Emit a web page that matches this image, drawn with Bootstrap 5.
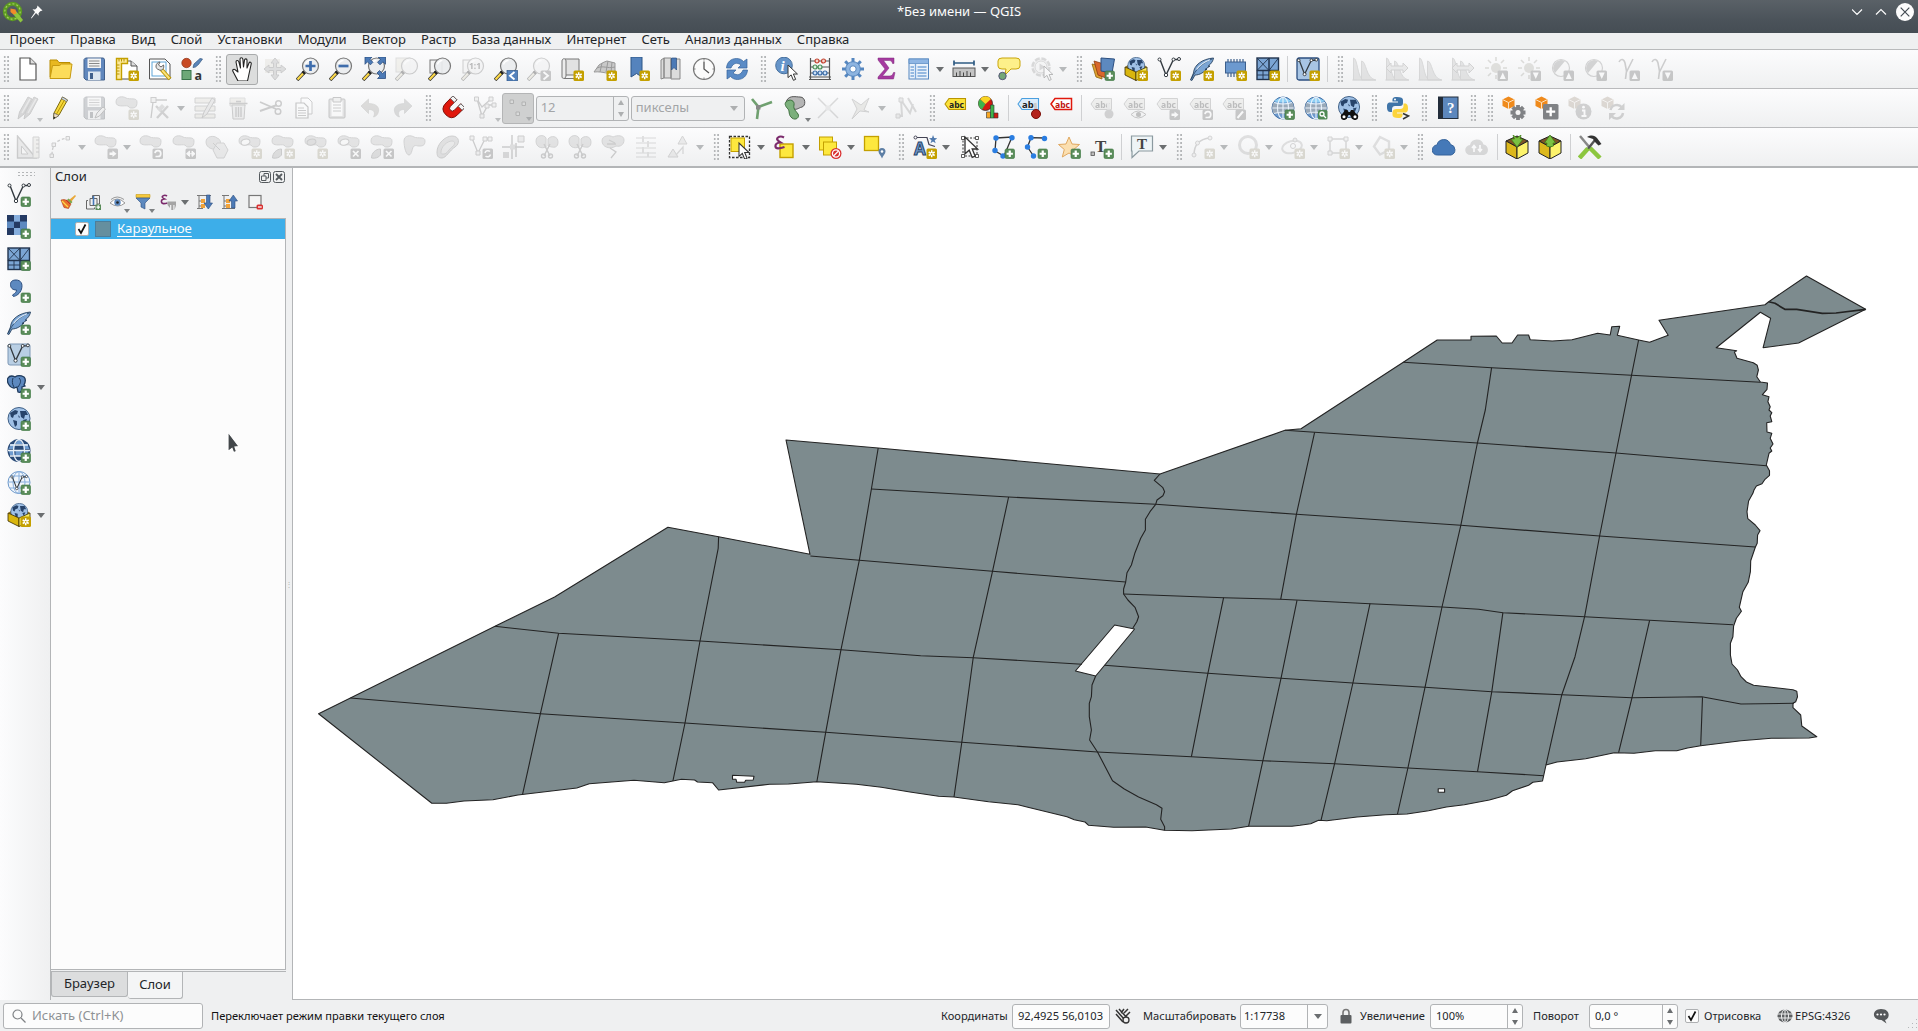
<!DOCTYPE html>
<html lang="ru">
<head>
<meta charset="utf-8">
<title>*Без имени — QGIS</title>
<link href="https://cdn.jsdelivr.net/npm/bootstrap@5.3.0/dist/css/bootstrap.min.css" rel="stylesheet">
<style>
html,body{height:100%}
body{font-family:"Noto Sans",sans-serif;font-size:13px;line-height:1.2;color:#232629;background:#eff0f1;overflow:hidden}
svg{display:block;flex:none}
.iconset{display:none}
.titlebar{height:33px;background:linear-gradient(#5a6167,#4b535a 60%,#454d54);color:#fcfcfc}
.titlebar .side{width:120px}
.menubar{height:16px;line-height:16px;padding:0 0 5px 9.500px;gap:15.2px;align-items:center}
.toolrow{height:39px;border-top:1px solid #b9babc;background:linear-gradient(#fcfcfd,#eff0f1)}
.tb{width:33px;height:31px;display:flex;align-items:center;justify-content:center;flex:none;position:relative;border:0;background:none;padding:0}
.tb svg{width:24px;height:24px}
.dd{width:45px;justify-content:flex-start;padding-left:4.5px}
.dd::after{content:"";border:4.5px solid transparent;border-top:5px solid #6b6e70;border-bottom:0;margin-left:5.3px}
.menu-in::after{content:"";position:absolute;right:1px;bottom:2px;border:3.5px solid transparent;border-top:4px solid #7d8082;border-bottom:0}
.off svg{filter:grayscale(.85) opacity(.33)}
.off::after{opacity:.45}
.toggled{background:#dcdddd;border:1px solid #a9abac;border-radius:3px;width:32px;margin:0 .5px}
.toggled.dim{background:#cfd0d0;border-color:#b4b5b6}
.grip{width:16.4px;height:28px;flex:none;background:radial-gradient(circle,#b4b6b8 .8px,transparent 1px) 6px 0/3.4px 4px;background-clip:content-box;padding:1px 4px 1px 6px}
.grip.first{width:11.3px;padding:1px 2px 1px 3px;background-position:3px 0}
.vsep{width:7px;height:26px;flex:none;background:linear-gradient(#cfd0d2,#cfd0d2) 3px 0/1px 100% no-repeat}
.box{background:#fcfcfc;border:1px solid #b1b3b5;border-radius:3px;display:flex;align-items:center;flex:none}
.box.dimmed{background:#eff0f1;color:#a3a5a7}
.spin{width:15px;height:100%;border-left:1px solid #b1b3b5;display:flex;flex-direction:column;justify-content:center;gap:7px;align-items:center;flex:none}
.spin::before{content:"";border:3.7px solid transparent;border-bottom:5px solid #6b6e70;border-top:0}
.spin::after{content:"";border:3.7px solid transparent;border-top:5px solid #6b6e70;border-bottom:0}
.dimmed .spin::before,.dimmed .spin::after,.dimmed .drop::after{opacity:.5}
.drop{width:20px;height:100%;display:flex;align-items:center;justify-content:center;margin-left:auto}
.drop::after{content:"";border:4.5px solid transparent;border-top:5px solid #6b6e70;border-bottom:0}
.workspace{border-top:2px solid #b3b5b7;min-height:0}
.leftbar{width:51px;border-right:1px solid #b3b5b7;background:linear-gradient(90deg,#fcfcfd,#eff0f1);padding-top:2px}
.leftbar .tb{height:32.05px;margin-left:2.5px}
.leftbar .dd::after{margin-left:6px}
.hgrip{height:6px;width:18px;margin:1px 0 2px 17px;background:radial-gradient(circle,#b4b6b8 .8px,transparent 1px) 0 0/4px 3px}
.dock{width:235px}
.docktitle{height:18px;padding:0 1px 0 4px}
.docktools{height:32px;padding:0 3px 0 4px}
.docktools .tb{width:25px}
.docktools .tb svg{width:16px;height:16px}
.docktools .menu-in::after{bottom:5px;right:0}
.docktools .dd{width:37px;padding-left:5px}
.docktools .dd::after{margin-left:5px}
.tree{border:1px solid #b3b5b7;border-left:0;background:#fcfcfc}
.layer{height:20px;background:#3daee9;color:#fcfcfc;padding-left:24px;font-size:13.2px}
.chk{width:14px;height:14px;border:1px solid #aeb0b2;border-radius:2px;background:#fcfcfc;flex:none}
.swatch{width:16px;height:16px;background:#658f9f;border:1px solid #4c7e9a;margin:0 6px}
.lname{text-decoration:underline;text-underline-offset:2.5px}
.docktabs{height:29px;border-top:1px solid #b3b5b7;margin-top:1px}
.dtab{border:1px solid #b3b5b7;border-top:0;border-radius:0 0 3px 3px;display:flex;align-items:center;justify-content:center}
.canvasbox{border-left:1px solid #b3b5b7;border-bottom:1px solid #b3b5b7;background:#fff;min-width:0}
.split{width:6px;display:flex;align-items:center;justify-content:center;color:#b5b7b9;font-size:8px}
.statusbar{height:31px;font-size:11.1px;padding:1px 0 0 3px}
.statusbar>*{flex:none}
.statusbar .box{height:25px;padding-left:5px}
.w{white-space:nowrap}
.pointer{position:absolute;left:227px;top:431px}
</style>
<script src="https://cdn.jsdelivr.net/npm/bootstrap@5.3.0/dist/js/bootstrap.bundle.min.js"></script>
</head>
<body class="d-flex flex-column vh-100">

<svg class="iconset">
<defs>
<!-- corner badges -->
<g id="bst"><rect x="13.5" y="13.5" width="10.5" height="10.5" rx="1.5" fill="#c4a000"/><path d="M18.7 15.3v7M15.7 17l6 3.5M15.7 20.500l6-3.500" stroke="#fff" stroke-width="1.5"/><circle cx="18.7" cy="18.800" r=".9" fill="#c4a000"/></g>
<g id="bpl"><rect x="14" y="14" width="9.500" height="9.500" rx="1.500" fill="#5a8c5a" stroke="#35733a" stroke-width=".6"/><path d="M18.750 15.600v6.300M15.600 18.750h6.300" stroke="#fff" stroke-width="2.200"/></g>
<g id="bbox"><rect x="13.5" y="13.5" width="10.5" height="10.5" rx="1.5" fill="#6a6a6a"/></g>
<g id="bx"><use href="#bbox"/><path d="M16 16l5.500 5.500M21.500 16l-5.500 5.500" stroke="#fff" stroke-width="1.700"/></g>
<g id="bright"><use href="#bbox"/><path d="M15.500 17.500h3v-2l4 3.300-4 3.300v-2h-3z" fill="#fff"/></g>
<g id="brot"><use href="#bbox"/><path d="M16.500 21.500h2.500a2.900 2.900 0 1 0-3-3.300" fill="none" stroke="#fff" stroke-width="1.700"/></g>
<g id="bup"><use href="#bbox"/><path d="M18.750 15.500l3 6.500h-6z" fill="#fff"/></g>
<g id="bdn"><use href="#bbox"/><path d="M18.750 22l3-6.500h-6z" fill="#fff"/></g>
<!-- shared shapes -->
<g id="lens"><path d="M8.500 15L1 23" stroke="#333" stroke-width="3.600"/><path d="M8 15.600L1.500 22.600" stroke="#fcd94a" stroke-width="2.200"/><path d="M8.800 14.600l-1.900 2" stroke="#222" stroke-width="3.600"/><circle cx="14.500" cy="9" r="8" fill="#e9ecee" fill-opacity=".93" stroke="#777" stroke-width="1.200"/><path d="M9.500 7.500a5.500 5.500 0 0 1 5-4" stroke="#fff" fill="none" stroke-width="1.300"/></g>
<g id="blob"><path d="M1 6c0-6 7-6 10-4 4 2 11-1 11 4s-2 6-5 6-2 0-4-2c-3-1-12 2-12-4z" fill="#b9bab9" stroke="#8a8a8a"/></g>
<g id="vee"><path d="M3 2.500l6 15.500L16.500 2.500H22" fill="none" stroke="#333a40" stroke-width="1.400"/><g fill="#fff" stroke="#333a40"><circle cx="2.500" cy="2.500" r="1.500"/><circle cx="9" cy="18" r="1.700"/><circle cx="16.500" cy="2.500" r="1.500"/><circle cx="22" cy="2" r="1.500"/></g></g>
<g id="feath"><path d="M23.500 1C12 2 4 8 3.500 16L.5 23l1.500.4L5 18c5 0 9-3 12-6l-2 .5 5-3.500-2 .3C21.500 6.500 23 4 23.500 1z" fill="#7ba5d4" stroke="#26415f" stroke-width=".9"/><path d="M1.500 22C5 13 12 6 22 2" fill="none" stroke="#26415f" stroke-width=".8"/><path d="M6.500 12.500C10 8 14 5 20 2.800" fill="none" stroke="#dbe9f7" stroke-width="1.200"/></g>
<g id="mesh"><rect x="1" y="1" width="21.500" height="21.500" fill="#7ba5d4" stroke="#22344e" stroke-width="1.400"/><path d="M13 1v21.500M1 13.500h21.500" stroke="#22344e" stroke-width="1.500"/><path d="M1 1l12 12.500M1 13.500L13 1M13 13.500L22.500 1M7 13.500v9M1 18h12" stroke="#22344e" stroke-width=".9"/></g>
<g id="globe"><circle cx="12" cy="11.500" r="11" fill="#9fc0e6" stroke="#3f5f85"/><path d="M3 6l5-3 3 1-1 3-3 1-1 3-2-1zM13 4l6 0 2 4-3 0-1 4-3-2zM6 13l4 1 0 4-2 2zM16 13l4-1-2 5zM11 8l2 2-1 1z" fill="#27436a"/></g>
<g id="net"><circle cx="12" cy="12" r="11" fill="#6c99cd" stroke="#3f6ea5"/><path d="M2 7q10 2 20 0l1 5-1 5q-10 2-20 0l-1-5z" fill="#9aa9b8"/><path d="M3 5q8-6 18 0-9 3-18 0z" fill="#8fd0f5"/><path d="M12 1v22M1.500 12h21M3 6.500q9 3 18 0M3 17.500q9-3 18 0" stroke="#e9f2fb" stroke-width="1.100" fill="none"/><ellipse cx="12" cy="12" rx="5.500" ry="10.800" fill="none" stroke="#e9f2fb" stroke-width="1.100"/></g>
<g id="cube3"><path d="M1 10l11 5v8.500L1 18z" fill="#d9b60e" stroke="#3a2c00" stroke-width=".8"/><path d="M12 15l11-5v8l-11 5.500z" fill="#fcf060" stroke="#3a2c00" stroke-width=".8"/></g>
<g id="crate"><path d="M1 6l11-5 11 5-11 6z" fill="#7d5427" stroke="#222"/><path d="M1 6l11 6v12L1 18z" fill="#dcb81c" stroke="#222"/><path d="M12 12l11-6v12l-11 6z" fill="#fcf36c" stroke="#222"/></g>
<g id="cube"><path d="M.5 3.500L6.500 .5l6 3v6.500l-6 3-6-3z" fill="#ef8a1c"/><path d="M.5 3.500l6 3 6-3M6.500 6.500V13" stroke="#fde1bd" fill="none"/></g>
<g id="scis"><path d="M9 9l6 12M15 9L9 21" stroke="#777" stroke-width="1.500"/><circle cx="8.500" cy="21" r="2" fill="none" stroke="#777" stroke-width="1.400"/><circle cx="15.500" cy="21" r="2" fill="none" stroke="#777" stroke-width="1.400"/></g>
<g id="tag"><path d="M1 8l4-5.500H21.500v11H5z"/></g>
<g id="cur"><path d="M0 0v14l3.500-3 2.500 6 2.500-1-2.500-6h4.500z" fill="#fff" stroke="#333" stroke-width="1.100"/></g>
<g id="spread"><path d="M1.500 23V1c4 0 4 19 9 21.500M9.500 23V4c5 0 4 17 14 19z" fill="#bbb" stroke="#999"/><path d="M.5 23h23.500" stroke="#999" stroke-width="1.300"/></g>
<g id="sun"><circle cx="12" cy="11" r="5" fill="#b5b075"/><path d="M12 0v4M12 18v4M1 11h4M19 11h4M4 3l3 3M20 3l-3 3M4 19l3-3" stroke="#a9a46a" stroke-width="1.600"/></g>
<g id="page"><path d="M4 1h10l6 6v16H4z" fill="#fff" stroke="#555" stroke-width="1.200"/><path d="M14 1v6h6" fill="#ddd" stroke="#555" stroke-width="1.200"/></g>
<g id="gabc"><g fill="#ddd9c0" stroke="#888"><use href="#tag"/></g><text x="5" y="12" font-size="9.500" font-weight="bold" font-family="Noto Sans" fill="#444" textLength="15" lengthAdjust="spacingAndGlyphs">abc</text></g>
<g id="gg"><path d="M16 9v15M8.500 16.500h15M10.700 11.200l10.600 10.600M21.300 11.200L10.700 21.800" stroke="#808285" stroke-width="3.800"/><circle cx="16" cy="16.500" r="5.800" fill="#808285"/><circle cx="16" cy="16.500" r="2.500" fill="#f4f4f4"/></g>
</defs>
<!-- project -->
<symbol id="i-new" viewBox="0 0 24 24"><use href="#page"/></symbol>
<symbol id="i-open" viewBox="0 0 24 24"><path d="M1 20V3h7l2 2.500h11V9" fill="#e8b820" stroke="#b98d00"/><path d="M1 21.500L3.500 8.500h7l2-1.500h10.500l-2 14.500z" fill="#fcdc5a" stroke="#c79a10"/></symbol>
<symbol id="i-save" viewBox="0 0 24 24"><path d="M2 2.500L3.500 1H21.500L22.500 2.500V23H4l-2-2z" fill="#6087bd" stroke="#41608c"/><rect x="5.500" y="1.500" width="13.500" height="9.500" fill="#f3f3f3"/><path d="M7 4h10.500M7 6.500h10.500M7 9h10.500" stroke="#888"/><rect x="6" y="14.500" width="12.500" height="8.500" fill="#dde6f0"/><rect x="8" y="16" width="3" height="6" fill="#41608c"/></symbol>
<symbol id="i-layout" viewBox="0 0 24 24"><path d="M6 4h10l6 5v13H5V4z" fill="#fff" stroke="#555"/><path d="M16 4v5h6" fill="#ddd" stroke="#555"/><path d="M1.500 1.500h11v5h-6v16h-5z" fill="#fce99a" stroke="#c4a000" stroke-width="1.400"/><path d="M4 2v2.500M6.500 2v2.500M9 2v2.500M2 8h2.500M2 11h2.500M2 14h2.500M2 17h2.500" stroke="#b99500"/><use href="#bst"/></symbol>
<symbol id="i-layman" viewBox="0 0 24 24"><path d="M1.500 2H17l5 5v15H1.500z" fill="#fff" stroke="#555"/><rect x="4" y="5" width="14" height="14" fill="none" stroke="#5fa6d8"/><path d="M13 12l9 10" stroke="#b99500" stroke-width="4"/><path d="M13.500 12.500l8 9" stroke="#fce27a" stroke-width="2"/><path d="M8 9c0-2 2-4 4-4l-1.500 3 2.500 2 2.500-2c1 3-1 6-4 5s-3.500-2-3.500-4z" fill="#e5e5e5" stroke="#666"/></symbol>
<symbol id="i-style" viewBox="0 0 24 24"><circle cx="5.500" cy="6" r="4.700" fill="#c84a24" stroke="#8d3417" stroke-width=".7"/><path d="M12 10.500l1-3.500 6-5.500 2.500 .5-4 5.500-3 2.500z" fill="#5b86ba" stroke="#35577f" stroke-width=".7"/><rect x="1" y="13.500" width="9" height="9" fill="#6da878" stroke="#39734a"/><text x="13.500" y="22.500" font-size="12.500" font-family="Noto Sans" fill="#333">a</text></symbol>
<!-- navigation -->
<symbol id="i-hand" viewBox="0 0 24 24"><path d="M8 24L3 14.500c-1-2 1-3 2.500-1.500L8 15 6 5c0-2 2.300-2 2.800-.3L10.500 11 10 2.300c0-2 2.600-2 2.900 0L13.500 10l1-7c.3-1.700 2.500-1.500 2.500.3L17 11l2-5c.7-1.500 2.600-.8 2.200 1L19 17l-1.500 7z" fill="#fff" stroke="#222" stroke-width="1.100" stroke-linejoin="round"/></symbol>
<symbol id="i-pansel" viewBox="0 0 24 24"><rect x="2" y="2" width="15" height="14" fill="#e4da9a"/><path d="M12 1l4 5h-2.500v4.500H18V8l5 4-5 4v-2.500h-4.500V18H16l-4 5-4-5h2.500v-4.500H6V16l-5-4 5-4v2.500h4.500V6H8z" fill="#aaa" stroke="#777"/></symbol>
<symbol id="i-zin" viewBox="0 0 24 24"><use href="#lens"/><path d="M14.500 4v10M9.500 9h10" stroke="#3f6dac" stroke-width="2.700"/></symbol>
<symbol id="i-zout" viewBox="0 0 24 24"><use href="#lens"/><path d="M9.500 9h10" stroke="#3f6dac" stroke-width="2.700"/></symbol>
<symbol id="i-zfull" viewBox="0 0 24 24"><use href="#lens"/><path d="M3 0h7L8 2.300l3 3-2.500 2.500-3-3L3 7.300zM23.500 0v7.300L21 4.800l-3 3-2.500-2.500 3-3L16 0zM23.500 21.500h-8l2.500-2.500-3-3 2.500-2.500 3 3 3-2.500z" fill="#4c7ab6" stroke="#2c4f80" stroke-width=".8"/></symbol>
<symbol id="i-zsel" viewBox="0 0 24 24"><rect x="1" y="1" width="14" height="14" fill="#efe28a" stroke="#aaa"/><use href="#lens"/></symbol>
<symbol id="i-zlay" viewBox="0 0 24 24"><rect x="2" y="3" width="12" height="13" fill="#f4f4f4" stroke="#777"/><use href="#lens"/></symbol>
<symbol id="i-znat" viewBox="0 0 24 24"><rect x="2" y="3" width="12" height="13" fill="#eee" stroke="#777"/><use href="#lens"/><text x="8" y="12.300" font-size="8.500" font-weight="bold" font-family="Noto Sans" fill="#333">1:1</text></symbol>
<symbol id="i-zlast" viewBox="0 0 24 24"><use href="#lens"/><rect x="13" y="13.500" width="10.500" height="10.500" fill="#5583bd" stroke="#2f5686" stroke-width=".7"/><path d="M20.500 15L16 18.700l4.500 3.700" stroke="#fff" stroke-width="1.900" fill="none"/></symbol>
<symbol id="i-znext" viewBox="0 0 24 24"><use href="#lens"/><use href="#bbox"/><path d="M16.500 15l4.500 3.700-4.500 3.700" stroke="#fff" stroke-width="1.900" fill="none"/></symbol>
<symbol id="i-nmap" viewBox="0 0 24 24"><path d="M5 2h14v16H5z" fill="#e2e2e2" stroke="#777"/><path d="M2 20V4c0-3 4-3 4 0v15c0 3-4 3-4 1z" fill="#ececec" stroke="#777"/><path d="M4 21.500h10" stroke="#777"/><use href="#bst"/></symbol>
<symbol id="i-n3d" viewBox="0 0 24 24"><path d="M1 15l5-7c3-2 5-3 8-4l8 2 0 10c-6 2-12-2-21-1z" fill="#c9c9c9" stroke="#999"/><path d="M4 11c6-3 10 1 18-1M9 6l-2 9M15 4l-2 11M19 5l-1 11" stroke="#999" fill="none"/><use href="#bst"/></symbol>
<symbol id="i-nbm" viewBox="0 0 24 24"><path d="M5 0h11v20l-5.500-3.500L5 20z" fill="#5583bd" stroke="#2f5686"/><use href="#bst"/></symbol>
<symbol id="i-sbm" viewBox="0 0 24 24"><path d="M2 3l3-2v20l-3 1zM5 1h7v20H5zM12 2h9v20h-9z" fill="#dcdcdc" stroke="#888"/><path d="M12.500 1h5v12L15 10.500 12.500 13z" fill="#4c7ab6" stroke="#2c4f80" stroke-width=".7"/></symbol>
<symbol id="i-time" viewBox="0 0 24 24"><circle cx="12" cy="12" r="10.500" fill="#fbfbfb" stroke="#777" stroke-width="1.200"/><path d="M12 4.500V12l5 4" stroke="#555" stroke-width="1.300" fill="none"/><path d="M12 2v1.500M12 20.500V22M2 12h1.500M20.500 12H22" stroke="#777"/></symbol>
<symbol id="i-refr" viewBox="0 0 24 24"><path d="M1.500 11C2 5 6 1.500 11.500 1.500c3 0 5 1 7 3L22 2v9h-9l3-3C12 5 8 6 6 11zM22.500 13c-.500 6-4.500 9.500-10 9.500-3 0-5-1-7-3L2 22v-9h9l-3 3c4 3 8 2 10-3z" fill="#5a8bc6" stroke="#35639b" stroke-width=".7"/></symbol>
<!-- attributes -->
<symbol id="i-info" viewBox="0 0 24 24"><circle cx="9" cy="8.500" r="8.300" fill="#6594c9" stroke="#466f9d"/><text x="5.500" y="14" font-size="15" font-style="italic" font-weight="bold" font-family="Liberation Serif" fill="#fff">i</text><use href="#cur" transform="translate(13 8) scale(.9)"/></symbol>
<symbol id="i-abac" viewBox="0 0 24 24"><path d="M2.500 1v22M21.500 1v22M1 22.500h22M2 4h20M2 10h20M2 16h20M1 20h22" stroke="#555" stroke-width="1.200"/><g fill="#f6d5ce" stroke="#c3402c" stroke-width="1.200"><circle cx="9" cy="4" r="2"/><circle cx="15.500" cy="4" r="2"/></g><g fill="#dff0df" stroke="#4b8f58" stroke-width="1.200"><circle cx="7" cy="10" r="2"/><circle cx="12" cy="10" r="2"/></g><g fill="#cde1f7" stroke="#3c6da8" stroke-width="1.200"><circle cx="7" cy="16" r="2"/><circle cx="12" cy="16" r="2"/><circle cx="17" cy="16" r="2"/></g></symbol>
<symbol id="i-gear" viewBox="0 0 24 24"><g stroke="#5586bf" stroke-width="3"><path d="M12 1v22M1 12h22M4.200 4.200l15.600 15.600M19.800 4.200L4.200 19.800"/></g><circle cx="12" cy="12" r="7.300" fill="#8db4e0" stroke="#5586bf"/><circle cx="12" cy="12" r="3.200" fill="#fff" stroke="#5586bf"/></symbol>
<symbol id="i-sigma" viewBox="0 0 24 24"><path d="M4 1H20v5.500h-1.500C18 4 17 3.500 14 3.500H9.500L15 11l-6.500 8H15c3 0 3.500-1 4.500-3.500H21L19.500 22H4v-2L11 12 4 3z" fill="#a53aa0" stroke="#7c2a7a" stroke-width=".5"/></symbol>
<symbol id="i-table" viewBox="0 0 24 24"><rect x="2" y="2" width="19.500" height="20" fill="#eaf2fb" stroke="#5586bf"/><path d="M2 2h19.500v4.500H2z" fill="#8fb6e4" stroke="#5586bf" stroke-width=".7"/><path d="M8.500 7v15M3.500 10H7M3.500 13H7M3.500 16H7M3.500 19H7M10.500 10h9M10.500 13h9M10.500 16h9M10.500 19h9" stroke="#7aa6d9" stroke-width="1.300"/></symbol>
<symbol id="i-meas" viewBox="0 0 24 24"><path d="M2 6h20M2 3.500v5M22 3.500v5" stroke="#2f5b83" stroke-width="1.700"/><rect x="1" y="11" width="22" height="8.500" fill="#c4c4c4" stroke="#555"/><path d="M4.500 15.500v4M8 14v5.500M11.500 15.500v4M15 14v5.500M18.500 15.500v4" stroke="#444"/></symbol>
<symbol id="i-tip" viewBox="0 0 24 24"><path d="M5 1h14q4 0 4 3v5q0 3-4 3h-5l-6 6 1-6H5Q1 12 1 9V4q0-3 4-3z" fill="#fdf08a" stroke="#c9a50a"/><circle cx="5.500" cy="19" r="3.700" fill="#74a878" stroke="#557"/></symbol>
<symbol id="i-act" viewBox="0 0 24 24"><circle cx="11" cy="10" r="8.500" fill="#ddd" stroke="#999" stroke-width="2.500" stroke-dasharray="5 1.700"/><circle cx="11" cy="10" r="6" fill="#eee" stroke="#999"/><path d="M9.500 6.500l5.500 3.500-5.500 3.500z" fill="#999"/><use href="#cur" transform="translate(14 9) scale(.85)"/></symbol>
<!-- data source / create -->
<symbol id="i-dsm" viewBox="0 0 24 24"><path d="M1 7l9 2 1 13-6-2z" fill="#e0a030" stroke="#8a6410" stroke-width=".8"/><path d="M3 4l10 3 2 14-8-3z" fill="#d9672b" stroke="#8d3b10" stroke-width=".8"/><path d="M10 1l13.500 1-2.500 14-11-2z" fill="#5d89bf" stroke="#2c4f80"/><use href="#bpl"/></symbol>
<symbol id="i-gpkg" viewBox="0 0 24 24"><path d="M1 10l6-4 10 0 6 4-11 5z" fill="#8a6a10"/><use href="#globe" transform="translate(3 0) scale(.77)"/><use href="#cube3"/><use href="#bst"/></symbol>
<symbol id="i-shp" viewBox="0 0 24 24"><use href="#vee"/><use href="#bst"/></symbol>
<symbol id="i-spl" viewBox="0 0 24 24"><use href="#feath"/><use href="#bst"/></symbol>
<symbol id="i-mem" viewBox="0 0 24 24"><path d="M5 2v18M8 2v18M11 2v18M14 2v18M17 2v18M20 2v18" stroke="#3c5f8c" stroke-width="1.200"/><rect x="2.500" y="5" width="20" height="11" fill="#6c99cf" stroke="#3c5f8c"/><use href="#bst"/></symbol>
<symbol id="i-mshn" viewBox="0 0 24 24"><use href="#mesh"/><use href="#bst"/></symbol>
<symbol id="i-vrt" viewBox="0 0 24 24"><rect x="1" y="1" width="22" height="22" rx="2" fill="#a8c5e4" stroke="#2c4f80" stroke-width="1.300"/><use href="#vee" transform="translate(.5 1) scale(.9)"/><use href="#bst"/></symbol>
<!-- raster -->
<symbol id="i-hist" viewBox="0 0 24 24"><use href="#spread"/></symbol>
<symbol id="i-hist2" viewBox="0 0 24 24"><use href="#spread"/><path d="M1 11l5-5v3h12V6l5 5-5 5v-3H6v3z" fill="#ccc" stroke="#888"/></symbol>
<symbol id="i-brup" viewBox="0 0 24 24"><use href="#sun"/><use href="#bup"/></symbol>
<symbol id="i-brdn" viewBox="0 0 24 24"><use href="#sun"/><use href="#bdn"/></symbol>
<symbol id="i-coup" viewBox="0 0 24 24"><circle cx="11" cy="11" r="8.500" fill="#f4f4f4" stroke="#888" stroke-width="1.200"/><path d="M5 16A8 8 0 0 1 15 4z" fill="#888"/><use href="#bup"/></symbol>
<symbol id="i-codn" viewBox="0 0 24 24"><circle cx="11" cy="11" r="8.500" fill="#f4f4f4" stroke="#888" stroke-width="1.200"/><path d="M5 16A8 8 0 0 1 15 4z" fill="#888"/><use href="#bdn"/></symbol>
<symbol id="i-gaup" viewBox="0 0 24 24"><path d="M3 5c2-4 5-3 6 1l1.500 8-1 8M17 2l-6.500 13" fill="none" stroke="#777" stroke-width="1.600"/><use href="#bup"/></symbol>
<symbol id="i-gadn" viewBox="0 0 24 24"><path d="M3 5c2-4 5-3 6 1l1.500 8-1 8M17 2l-6.500 13" fill="none" stroke="#777" stroke-width="1.600"/><use href="#bdn"/></symbol>
<!-- editing -->
<symbol id="i-pens" viewBox="0 0 24 24"><path d="M2 23l1.500-7L12 1l4 2-8 15zM8 23l1.500-7L18 1l4 2-8 15z" fill="#999" stroke="#777"/><path d="M6 17L14 3M12 17L20 3" stroke="#ccc" stroke-width="1.500"/></symbol>
<symbol id="i-pen" viewBox="0 0 24 24"><path d="M4.500 23l.5-6L13.500 1l5 3-8.500 15z" fill="#f6d83c" stroke="#7d6a10"/><path d="M4.500 23l.5-6 5 2.500z" fill="#f1dfc0" stroke="#555" stroke-width=".7"/><path d="M4.500 23l.3-2.500 1.700 1z" fill="#222"/><path d="M13.500 1l5 3-1 1.800-5-3z" fill="#cfd8e0" stroke="#666" stroke-width=".7"/><path d="M7.500 18L15.500 4" stroke="#b99500"/></symbol>
<symbol id="i-sedit" viewBox="0 0 24 24"><use href="#i-save" width="24" height="24"/><path d="M13 22l2-5 6-6 2.500 2-6 7z" fill="#ddd" stroke="#555"/></symbol>
<symbol id="i-addp" viewBox="0 0 24 24"><use href="#blob"/><use href="#bst"/></symbol>
<symbol id="i-vert" viewBox="0 0 24 24"><path d="M7 4h12M5 6L3 22" stroke="#777" stroke-width="1.300"/><rect x="3" y="1.500" width="5" height="5" fill="#ddd" stroke="#777"/><path d="M8 10l12 12M20 10L9 22" stroke="#888" stroke-width="2.400"/><path d="M9 13l5-5 3 3-5 5z" fill="#aaa"/></symbol>
<symbol id="i-multi" viewBox="0 0 24 24"><path d="M2 2h20v5H2zM2 10h20v5H2zM2 18h20v4H2z" fill="#e4da9a" stroke="#888"/><path d="M9 22l2-6 8-14 3 2-8 14z" fill="#ccc" stroke="#777"/></symbol>
<symbol id="i-del" viewBox="0 0 24 24"><path d="M4 2h15v8H4z" fill="#e4da9a" stroke="#aaa"/><path d="M6 9l1 14h11l1-14z" fill="#d9d9d9" stroke="#777"/><path d="M3.500 7.500h18M10 5.500h5M10 11v10M12.500 11v10M15 11v10" stroke="#777" stroke-width="1.400"/></symbol>
<symbol id="i-cut" viewBox="0 0 24 24"><path d="M1 6l16 7M1 15L18 9" stroke="#777" stroke-width="1.900"/><circle cx="19.500" cy="7.500" r="2.800" fill="none" stroke="#777" stroke-width="1.500"/><circle cx="19" cy="15.500" r="2.800" fill="none" stroke="#777" stroke-width="1.500"/></symbol>
<symbol id="i-copy" viewBox="0 0 24 24"><path d="M9 2h7l4 4v12H9z" fill="#fff" stroke="#777"/><path d="M4 7h8l4 4v11H4z" fill="#fff" stroke="#666" stroke-width="1.200"/><path d="M6 12h6M6 14.500h8M6 17h8M6 19.500h8" stroke="#777"/></symbol>
<symbol id="i-paste" viewBox="0 0 24 24"><rect x="4" y="3" width="16" height="19" rx="1" fill="#bbb" stroke="#666"/><path d="M6.500 5h11v15h-11z" fill="#fff"/><path d="M8 1.500h8V6H8z" fill="#ddd" stroke="#666"/><path d="M8 9h8M8 12h8M8 15h8" stroke="#777"/></symbol>
<symbol id="i-undo" viewBox="0 0 24 24"><path d="M3 10l7.500-7v4.500c8 0 11 4 10 8s-3 5-5 5.500c2-4 1-7.500-5-7.500v4z" fill="#b0a282" stroke="#8b8270" stroke-width=".6"/></symbol>
<symbol id="i-redo" viewBox="0 0 24 24"><path d="M21 10l-7.500-7v4.500c-8 0-11 4-10 8s3 5 5 5.500c-2-4-1-7.500 5-7.500v4z" fill="#9a9f98" stroke="#80857f" stroke-width=".6"/></symbol>
<!-- snapping -->
<symbol id="i-mag" viewBox="0 0 24 24"><g transform="translate(1 1) rotate(45 12 12) scale(.92)"><path d="M3 3h6v10q0 3 3 3t3-3V3h6v11q0 9-9 9t-9-9z" transform="rotate(0)" fill="#e0180c" stroke="#7a0c05"/><path d="M3 3h6v4H3zM15 3h6v4h-6z" fill="#f4f4f4" stroke="#666"/></g></symbol>
<symbol id="i-sv" viewBox="0 0 24 24"><path d="M4 3l5 17M4 3l5 8 9-8M9 20l6-11h6" fill="none" stroke="#777" stroke-width="1.400"/><g fill="#ddd" stroke="#777"><path d="M1.500 1h4v4h-4zM16 1h4v4h-4zM7 18h4v4H7zM19 7h4v4h-4zM12 8h4v4h-4z"/></g></symbol>
<symbol id="i-sn3" viewBox="0 0 24 24"><g fill="#eee" stroke="#777"><path d="M4 4h3.500v3.500H4zM16 6h3.500v3.500H16zM10 16h3.500v3.500H10z"/></g></symbol>
<symbol id="i-topo" viewBox="0 0 24 24"><path d="M7 23L8.500 11 2 3M8.500 11L22 6" fill="none" stroke="#6fa06f" stroke-width="2.600"/><rect x="6" y="9" width="4.500" height="4.500" fill="#888"/></symbol>
<symbol id="i-over" viewBox="0 0 24 24"><path d="M4 4c3-5 9-3 13-3 6 0 6 9 2 10s-6 4-9 1S1 9 4 4z" fill="#b5b5b5" stroke="#555"/><path d="M3 6c4-4 9-1 8 3s2 6 4 9-2 7-6 4-2-7-4-9-4-5-2-7z" fill="#7cb07c" stroke="#3f6f3f"/></symbol>
<symbol id="i-xint" viewBox="0 0 24 24"><path d="M2 2l20 20M22 2L2 22" stroke="#999" stroke-width="1.500"/><path d="M9.500 9.500h5v5h-5z" fill="#ccc"/></symbol>
<symbol id="i-zig" viewBox="0 0 24 24"><path d="M3 23L8 13 3 3l9 6 8-7-5 12 5 2-9-1z" fill="#d0caa0" stroke="#888"/></symbol>
<symbol id="i-nn" viewBox="0 0 24 24"><path d="M3 20h5L7 4l9 13 3-9M14 2l8 14" fill="none" stroke="#999" stroke-width="2"/><path d="M2 18h4v4H2zM5 2h4v4H5z" fill="#ccc" stroke="#888"/></symbol>
<!-- labels -->
<symbol id="i-abc" viewBox="0 0 24 24"><g fill="#fbe23a" stroke="#b99500" stroke-width="1.100"><use href="#tag"/></g><text x="5" y="12" font-size="9.500" font-weight="bold" font-family="Noto Sans" fill="#222" textLength="15" lengthAdjust="spacingAndGlyphs">abc</text></symbol>
<symbol id="i-diag" viewBox="0 0 24 24"><circle cx="8.500" cy="7.500" r="7" fill="#d11b12" stroke="#222" stroke-width=".7"/><path d="M8.500 8L3 3a7 7 0 0 0 2 10.500z" fill="#3db34c"/><path d="M8.500 8L3 3a7 7 0 0 1 11 0z" fill="#f9d423"/><path d="M9.500 16h4v6h-4z" fill="#f9a825" stroke="#333" stroke-width=".6"/><path d="M13.500 9h3.500v13h-3.500z" fill="#3db34c" stroke="#333" stroke-width=".6"/><path d="M17 17h4v5h-4z" fill="#d11b12" stroke="#333" stroke-width=".6"/></symbol>
<symbol id="i-abp" viewBox="0 0 24 24"><g fill="#dcedfb" stroke="#4a9fdf" stroke-width="1.100"><use href="#tag"/></g><text x="5" y="12" font-size="9.500" font-weight="bold" font-family="Noto Sans" fill="#222">ab</text><path d="M18 7l1 8" stroke="#ccc" stroke-width="3"/><circle cx="19" cy="18" r="4.500" fill="#b4231c" stroke="#7a0c05"/></symbol>
<symbol id="i-abr" viewBox="0 0 24 24"><g fill="#fff" stroke="#e0180c" stroke-width="1.500"><use href="#tag"/></g><text x="5" y="12" font-size="9.500" font-weight="bold" font-family="Noto Sans" fill="#c01410" textLength="15" lengthAdjust="spacingAndGlyphs">abc</text></symbol>
<symbol id="i-ab1" viewBox="0 0 24 24"><use href="#gabc"/><path d="M18 7l1 8" stroke="#ccc" stroke-width="3"/><circle cx="19" cy="18" r="4.500" fill="#888"/></symbol>
<symbol id="i-ab2" viewBox="0 0 24 24"><use href="#gabc"/><path d="M8 18.500q7-7 15 0-8 7-15 0z" fill="#eee" stroke="#666"/><circle cx="15.500" cy="18.500" r="2.500" fill="#555"/></symbol>
<symbol id="i-ab3" viewBox="0 0 24 24"><use href="#gabc"/><use href="#bright"/></symbol>
<symbol id="i-ab4" viewBox="0 0 24 24"><use href="#gabc"/><use href="#brot"/></symbol>
<symbol id="i-ab5" viewBox="0 0 24 24"><use href="#gabc"/><use href="#bbox"/><path d="M15.500 22l5.500-6.500" stroke="#fff" stroke-width="2"/></symbol>
<symbol id="i-net1" viewBox="0 0 24 24"><use href="#net"/><use href="#bpl"/></symbol>
<symbol id="i-net2" viewBox="0 0 24 24"><use href="#net"/><rect x="14" y="14" width="9.500" height="9.500" rx="1.500" fill="#4f8a54"/><circle cx="18" cy="18" r="2" fill="none" stroke="#fff" stroke-width="1.300"/><path d="M19.500 19.500l2.500 2.500" stroke="#fff" stroke-width="1.300"/></symbol>
<symbol id="i-bino" viewBox="0 0 24 24"><use href="#globe" transform="translate(.5 0) scale(.96)"/><path d="M4 20l4-6h2.500l1 2h1.500l1-2H16.500l4 6-3 3h-2.500l-2-4h-1.500l-2 4H7z" fill="#111"/><circle cx="7" cy="20.800" r="2.400" fill="#fff" stroke="#111" stroke-width="1.700"/><circle cx="18" cy="20.800" r="2.400" fill="#fff" stroke="#111" stroke-width="1.700"/></symbol>
<symbol id="i-py" viewBox="0 0 24 24"><path d="M11 1C6 1 6.500 3 6.500 5.500H12V6.500H4C1 6.500 1 9 1 11s.5 5 3 5h2v-3c0-2 1.500-3 3-3h5c2 0 3-1 3-3V4c0-2-2-3-6-3z" fill="#3f74a8"/><path d="M12 22c5 0 4.500-2 4.500-4.500H11V16.500h8c3 0 3-2.500 3-4.500s-.5-4.500-3-4.500h-1.500V10c0 2-1.500 3-3 3h-4c-2 0-4 1-4 3v3c0 2 2 3 5.500 3z" fill="#fcd43a"/><circle cx="9" cy="3.500" r="1" fill="#fff"/><path d="M17 17.500l5.500 2.500-5.500 3" fill="none" stroke="#333" stroke-width="1.500"/></symbol>
<symbol id="i-book" viewBox="0 0 24 24"><rect x="2.500" y="1" width="19.500" height="21.500" fill="#5c87bd" stroke="#222e3d"/><path d="M2.500 1H7v21.500H2.500z" fill="#232d3a"/><text x="11" y="17" font-size="15" font-family="Liberation Serif" fill="#fff">?</text></symbol>
<symbol id="i-cg" viewBox="0 0 24 24"><use href="#cube"/><use href="#gg"/></symbol>
<symbol id="i-cp" viewBox="0 0 24 24"><use href="#cube"/><rect x="8" y="8" width="15.500" height="15.500" rx="1.500" fill="#808285"/><path d="M15.700 11.200v9M11.200 15.700h9" stroke="#fff" stroke-width="2.300"/></symbol>
<symbol id="i-ci" viewBox="0 0 24 24"><use href="#cube"/><circle cx="15.500" cy="15.500" r="8" fill="#808285"/><path d="M14 14.500h2.500v5.500M13.500 20h5" stroke="#fff" stroke-width="1.900" fill="none"/><circle cx="15.500" cy="11.200" r="1.400" fill="#fff"/></symbol>
<symbol id="i-cr" viewBox="0 0 24 24"><use href="#cube"/><path d="M9.500 14a6.500 6.500 0 0 1 11.500-2.500M22 17a6.500 6.500 0 0 1-11.500 3" fill="none" stroke="#808285" stroke-width="2.500"/><path d="M23.500 7v7h-7zM8 24v-7h7z" fill="#808285"/></symbol>
<!-- advanced digitizing -->
<symbol id="i-cad" viewBox="0 0 24 24"><path d="M1.500 1v22H20z" fill="#ccc" stroke="#777" stroke-width="1.400"/><path d="M5.500 11v8H12z" fill="#f4f4f4" stroke="#777"/><path d="M17 2h6v21h-6z" fill="#e4deb8" stroke="#888"/><path d="M20 5h3M20 9h3M20 13h3M20 17h3" stroke="#777"/></symbol>
<symbol id="i-arc" viewBox="0 0 24 24"><path d="M3 20C3 9 8 4 20 3" fill="none" stroke="#777" stroke-width="1.300" stroke-dasharray="3 2"/><g fill="#ddd" stroke="#777"><path d="M1 19h3.500v3.500H1zM3 8h3.500v3.500H3zM17 1.500h3.500V5H17z"/></g></symbol>
<symbol id="i-mv" viewBox="0 0 24 24"><use href="#blob"/><use href="#bright"/></symbol>
<symbol id="i-ro" viewBox="0 0 24 24"><use href="#blob"/><use href="#brot"/></symbol>
<symbol id="i-sc" viewBox="0 0 24 24"><use href="#blob"/><use href="#bbox"/><path d="M14.500 18.750l3-2.700v5.400zM23 18.750l-3-2.700v5.400zM17 18.750h3" fill="#fff" stroke="#fff"/></symbol>
<symbol id="i-sim" viewBox="0 0 24 24"><path d="M1 7c0-6 8-7 11-4 4 1 5 7 1 10S1 13 1 7z" fill="#b9b9b9" stroke="#888"/><path d="M12 8h7l4 7-4 8h-7l-4-8z" fill="#ccc" stroke="#888"/><path d="M8 8l7 7" stroke="#777"/></symbol>
<symbol id="i-rng" viewBox="0 0 24 24"><use href="#blob"/><ellipse cx="7.500" cy="7" rx="4.500" ry="3" fill="#f4f4f4" stroke="#777" transform="rotate(-15 8 7)"/><use href="#bst"/></symbol>
<symbol id="i-prt" viewBox="0 0 24 24"><use href="#blob"/><path d="M1.500 23c0-5 4-9 9-9v6q-3 4-9 3z" fill="#aaa" stroke="#777"/><use href="#bst"/></symbol>
<symbol id="i-fil" viewBox="0 0 24 24"><use href="#blob"/><ellipse cx="7.500" cy="7" rx="4.500" ry="3" fill="#aaa" stroke="#777" transform="rotate(-15 8 7)"/><use href="#bst"/></symbol>
<symbol id="i-drg" viewBox="0 0 24 24"><use href="#blob"/><ellipse cx="7.500" cy="7" rx="4.500" ry="3" fill="#f4f4f4" stroke="#777" transform="rotate(-15 8 7)"/><use href="#bx"/></symbol>
<symbol id="i-dpt" viewBox="0 0 24 24"><use href="#blob"/><path d="M1.500 23c0-5 4-9 9-9v6q-3 4-9 3z" fill="#aaa" stroke="#777"/><use href="#bx"/></symbol>
<symbol id="i-resh" viewBox="0 0 24 24"><path d="M1 6c0-6 7-6 10-4 4 2 11-1 11 4s-3 5-6 5-2-1-5 0c-2 1-2 9-5 9S1 12 1 6z" fill="#b9b9b9" stroke="#888"/></symbol>
<symbol id="i-offs" viewBox="0 0 24 24"><path d="M1 17C1 9 9 1 16 1c8 0 8 8 3 11S10 23 6 23s-5-2-5-6z" fill="#b0b0b0" stroke="#777"/><path d="M5 17c0-5 6-11 11-11 4 0 3 4 0 6s-5 7-8 7-3 0-3-2z" fill="#ccc" stroke="#888"/></symbol>
<symbol id="i-rev" viewBox="0 0 24 24"><path d="M3 3l6 15L16 4h5" fill="none" stroke="#777" stroke-width="1.300"/><g fill="#ddd" stroke="#777"><path d="M1 1h4v4H1zM14 2h4v4h-4zM19 2h4v4h-4zM7 16h4v4H7z"/></g><use href="#bbox"/><path d="M16 18a3 3 0 0 1 5-1.500M21.500 19.500a3 3 0 0 1-5 1.500" stroke="#fff" stroke-width="1.500" fill="none"/></symbol>
<symbol id="i-trim" viewBox="0 0 24 24"><path d="M10 0v24M0 12h22M14 8v14" stroke="#777" stroke-width="1.500"/><path d="M8 9.500h5v5H8z" fill="#aaa"/><path d="M1 17h6v6H1z" fill="#999"/><path d="M16 1h6v6h-6z" fill="#ccc" stroke="#777"/></symbol>
<symbol id="i-spf" viewBox="0 0 24 24"><path d="M1 6c0-6 8-7 10-3v9C6 14 1 12 1 6zM13 4c3-4 10-3 10 3s-4 6-10 4z" fill="#b5b5b5" stroke="#888"/><use href="#scis"/></symbol>
<symbol id="i-mrg" viewBox="0 0 24 24"><path d="M1 6c0-6 8-6 11-4 4-2 11-2 11 3s-4 7-8 6c-6 4-14 1-14-5z" fill="#b5b5b5" stroke="#888"/><path d="M6 9l9 0M8 5l6 3M9 13l6 4-5 6" fill="none" stroke="#777" stroke-width="1.300"/></symbol>
<symbol id="i-mra" viewBox="0 0 24 24"><path d="M2 3h20M2 8h20M2 13h20M2 18h20M2 22h20" stroke="#999"/><path d="M9 1v6M14 6v6M9 12v6M14 17v5" stroke="#aaa" stroke-width="2"/></symbol>
<symbol id="i-rotp" viewBox="0 0 24 24"><path d="M11 9l4.500-8 4.500 8zM1 22l5-8 5 8z" fill="#ccc" stroke="#888"/><path d="M9 20l7-8v7" stroke="#999" stroke-width="1.300" fill="none"/></symbol>
<!-- selection -->
<symbol id="i-sel" viewBox="0 0 24 24"><rect x="1.500" y="1.500" width="20" height="21" fill="none" stroke="#333" stroke-width="1.300" stroke-dasharray="2.500 1.500"/><rect x="3" y="3" width="13.500" height="13.500" fill="#fde83e" stroke="#c4a000"/><use href="#cur" transform="translate(11 8) scale(.95)"/></symbol>
<symbol id="i-sele" viewBox="0 0 24 24"><rect x="7" y="9" width="13" height="13.500" fill="#fde83e" stroke="#c4a000" stroke-width="1.400"/><path d="M11 2.500Q7.500 .5 5 2.500T7.500 7.500Q2 8 2.500 11.500T11.500 12" fill="none" stroke="#7b2a6c" stroke-width="2.200"/></symbol>
<symbol id="i-dsel" viewBox="0 0 24 24"><rect x="1.500" y="2" width="13" height="13" fill="#fde83e" stroke="#c4a000"/><rect x="5.500" y="7" width="13" height="13" fill="#fde83e" stroke="#c4a000"/><circle cx="18" cy="18.500" r="5.500" fill="#d93030"/><circle cx="18" cy="18.500" r="3.600" fill="none" stroke="#fff" stroke-width="1.300"/><path d="M15.500 21l5-5" stroke="#fff" stroke-width="1.300"/></symbol>
<symbol id="i-sloc" viewBox="0 0 24 24"><rect x="1.500" y="1.500" width="14" height="14" fill="#fde83e" stroke="#c4a000" stroke-width="1.300"/><path d="M19 23.500c-1-3-3.500-4.500-3.500-7a3.500 3.500 0 0 1 7 0c0 2.500-2.500 4-3.500 7z" fill="#5d7fa5"/><circle cx="19" cy="16.500" r="1.300" fill="#fff"/></symbol>
<!-- annotations -->
<symbol id="i-ann" viewBox="0 0 24 24"><path d="M3 2.500h11l2 7 6 2" stroke="#445" fill="none" stroke-width="1.200"/><path d="M20 0l1.200 3 3 .300-2.500 1.900 1 3-2.700-1.800-2.500 1.800 1-3L16 3.300l3-.3z" fill="#4f79ad"/><circle cx="2.500" cy="2.500" r="1.500" fill="#fff" stroke="#445"/><text x="1" y="20" font-size="17" font-weight="bold" font-family="Noto Sans" fill="#6f98cb" stroke="#274469" stroke-width="1">A</text><use href="#bst"/></symbol>
<symbol id="i-esel" viewBox="0 0 24 24"><rect x="5" y="3" width="14" height="18" fill="none" stroke="#333" stroke-dasharray="2 1.500"/><g fill="#fff" stroke="#333" stroke-width=".8"><path d="M3.500 1.500h3v3h-3zM17.500 1.500h3v3h-3zM17.500 19.500h3v3h-3zM3.500 19.500h3v3h-3z"/></g><use href="#cur" transform="translate(7 2) scale(1.200)"/></symbol>
<symbol id="i-apol" viewBox="0 0 24 24"><path d="M5 3l16-1-8 19-9-5z" fill="#f4f7fa" stroke="#333" stroke-width="1.300"/><g fill="#2a7de1"><circle cx="5" cy="3" r="2.700"/><circle cx="21" cy="2.700" r="2.700"/><circle cx="12" cy="21" r="2.700"/><circle cx="4" cy="15.500" r="2.700"/></g><use href="#bpl"/></symbol>
<symbol id="i-alin" viewBox="0 0 24 24"><path d="M20.500 3L7 2.700 3.500 12 9.500 21" fill="none" stroke="#333" stroke-width="1.300"/><g fill="#2a7de1"><circle cx="20.500" cy="3.500" r="2.700"/><circle cx="7" cy="2.700" r="2.700"/><circle cx="3.500" cy="12" r="2.700"/><circle cx="9.500" cy="21" r="2.700"/></g><use href="#bpl"/></symbol>
<symbol id="i-amar" viewBox="0 0 24 24"><path d="M12 2l3 7 7.500 .5-5.800 5 2 7.500-6.700-4-6.700 4 2-7.500-5.800-5L9 9z" fill="#fbdfb0" stroke="#e0a860"/><use href="#bpl"/></symbol>
<symbol id="i-atxt" viewBox="0 0 24 24"><text x="5" y="17" font-size="17" font-weight="bold" font-family="Liberation Serif" fill="#444">T</text><rect x="1" y="17" width="3.500" height="3.500" fill="#bbb" stroke="#555" stroke-width=".8"/><use href="#bpl"/></symbol>
<symbol id="i-abal" viewBox="0 0 24 24"><path d="M1.500 1h21v15H9l-7 6.500V16h-.5z" fill="#eef4f6" stroke="#8b9aa0" stroke-width="1.200"/><text x="7" y="13.500" font-size="15" font-weight="bold" font-family="Liberation Serif" fill="#444">T</text></symbol>
<!-- shapes -->
<symbol id="i-s1" viewBox="0 0 24 24"><path d="M3 20C3 10 8 4 19 3" fill="none" stroke="#888" stroke-width="1.500"/><g fill="#ddd" stroke="#888"><circle cx="3" cy="20" r="2"/><circle cx="6.500" cy="8" r="2"/><circle cx="19" cy="3" r="2"/></g><use href="#bst"/></symbol>
<symbol id="i-s2" viewBox="0 0 24 24"><circle cx="12" cy="10" r="8.500" fill="none" stroke="#aaa" stroke-width="3"/><use href="#bst"/></symbol>
<symbol id="i-s3" viewBox="0 0 24 24"><ellipse cx="11" cy="12" rx="10" ry="6" fill="none" stroke="#aaa" stroke-width="2" transform="rotate(-15 11 12)"/><circle cx="12" cy="11" r="2.500" fill="none" stroke="#888"/><circle cx="14" cy="5" r="2" fill="#ccc" stroke="#888"/><use href="#bst"/></symbol>
<symbol id="i-s4" viewBox="0 0 24 24"><rect x="4" y="4" width="16" height="14" fill="none" stroke="#aaa" stroke-width="2"/><g fill="#ddd" stroke="#888"><path d="M2 2h4v4H2zM18 2h4v4h-4zM2 16h4v4H2z"/></g><use href="#bst"/></symbol>
<symbol id="i-s5" viewBox="0 0 24 24"><path d="M9 2l9 4.500V15L9 19.500l-6-8z" fill="none" stroke="#aaa" stroke-width="2.400"/><use href="#bst"/></symbol>
<symbol id="i-cloud" viewBox="0 0 24 24"><path d="M5.500 20a5 5 0 0 1-.5-10 7 7 0 0 1 13.500-.5A5.400 5.400 0 0 1 19 20z" fill="#4579b8" stroke="#35639b"/></symbol>
<symbol id="i-clsy" viewBox="0 0 24 24"><path d="M5.500 20a5 5 0 0 1-.5-10 7 7 0 0 1 13.500-.5A5.400 5.400 0 0 1 19 20z" fill="#999"/><path d="M9 17v-6M7 13l2-2.500 2 2.500M15 10v6M13 14l2 2.500 2-2.500" stroke="#fff" stroke-width="1.700" fill="none"/></symbol>
<symbol id="i-pk1" viewBox="0 0 24 24"><use href="#crate"/><path d="M12 12L6 4h3.500L8 0l4 3 4-3-1 4h3z" fill="#7ac142" stroke="#3c7a12" stroke-width=".7"/></symbol>
<symbol id="i-pk2" viewBox="0 0 24 24"><use href="#crate"/><path d="M12 0l5.500 8H15l.5 3-3.500 1-3.500-1 .5-3H6.500z" fill="#7ac142" stroke="#3c7a12" stroke-width=".7"/></symbol>
<symbol id="i-tool" viewBox="0 0 24 24"><path d="M2 1l10 12" stroke="#888" stroke-width="2.500"/><path d="M12 13l10 10" stroke="#8cc63f" stroke-width="4.500"/><path d="M17 5L9 15" stroke="#555" stroke-width="2.400"/><path d="M10 13.500L1.500 23" stroke="#8cc63f" stroke-width="4.500"/><path d="M9 2c5-3 8-1 10 1l4.500 6-3 1.500L17 7l-2-3z" fill="#333"/></symbol>
<!-- left bar -->
<symbol id="l-vec" viewBox="0 0 24 24"><use href="#vee"/><use href="#bpl"/></symbol>
<symbol id="l-ras" viewBox="0 0 24 24"><path d="M0 0h20v20H0z" fill="#5d89bf"/><path d="M0 0h7v6.500H0zM13 0h7v6.500h-7zM7 6.500h6V13H7zM0 13h7v7H0z" fill="#243a63"/><path d="M7 0h6v6.500H7zM7 13h6v7H7z" fill="#86aedd"/><use href="#bpl"/></symbol>
<symbol id="l-msh" viewBox="0 0 24 24"><use href="#mesh"/><use href="#bpl"/></symbol>
<symbol id="l-com" viewBox="0 0 24 24"><path d="M9 1c5 0 7 4 5.500 9S9 17 6.500 17.500l-1-1.500c3-2 4-3 4-5-4 0-6-2-6-5.500S6 1 9 1z" fill="#5d89bf" stroke="#2c4f80"/><use href="#bpl"/></symbol>
<symbol id="l-spl" viewBox="0 0 24 24"><use href="#feath"/><use href="#bpl"/></symbol>
<symbol id="l-vir" viewBox="0 0 24 24"><rect x="1" y="1" width="22" height="21" rx="2" fill="#b9cfe4" stroke="#7d97b5"/><use href="#vee" transform="translate(0 .5) scale(.95)"/><use href="#bpl"/></symbol>
<symbol id="l-pg" viewBox="0 0 24 24"><path d="M1 3c2-3 5-2 7-1 3-2 7-1 9 0 2 2 1 6 0 8l1 1-3 1v4q-2 2-4 1l-1-5-3 1C3 13-1 7 1 3z" fill="#5d89bf" stroke="#1f3a5c" stroke-width="1.300"/><path d="M6 3c-1 3-1 6 1 9M12 3c3 3 1 6-1 9" stroke="#1f3a5c" fill="none"/><use href="#bpl"/></symbol>
<symbol id="l-glb" viewBox="0 0 24 24"><use href="#globe"/><use href="#bpl"/></symbol>
<symbol id="l-wcs" viewBox="0 0 24 24"><circle cx="12" cy="11.500" r="11.500" fill="#2a4a76"/><path d="M12 0l4 5H8zM4 5l4 0-1 5H1.500zM20 5l-4 0 1 5h5.500zM8.500 11h7v6h-7zM1.500 11H7v5H3zM17 11h5l-2 5h-3z" fill="#6f9cd0"/><path d="M1 11.500h22M3 6h18M3 17h18" stroke="#e8f0f8" stroke-width="1.300"/><ellipse cx="12" cy="11.500" rx="5.500" ry="11" fill="none" stroke="#e8f0f8" stroke-width="1.300"/><use href="#bpl"/></symbol>
<symbol id="l-wfs" viewBox="0 0 24 24"><circle cx="12" cy="11.500" r="11" fill="#f1f6fb" stroke="#6b97c9"/><path d="M12 0v22M1 11h22M3 5h18M3 17h18" stroke="#86aedd"/><ellipse cx="12" cy="11.500" rx="6" ry="11" fill="none" stroke="#86aedd"/><use href="#vee" transform="translate(3 4) scale(.75)"/><use href="#bpl"/></symbol>
<!-- dock -->
<symbol id="d-br" viewBox="0 0 16 16"><path d="M15 1l1 1-5 6-2-2z" fill="#e8a838"/><path d="M8.500 4.500l4 3.500-1.500 1.500-4-3.500z" fill="#7aa64a"/><path d="M1 6l3-.5 3.500 1L11 10l-2.500 4.500-4.500-1z" fill="#e8702a" stroke="#b03c12" stroke-width=".6"/><path d="M2 7l6 6" stroke="#fcd94a" stroke-width="1.300"/><path d="M6 6l4 4" stroke="#c03030"/></symbol>
<symbol id="d-grp" viewBox="0 0 16 16"><path d="M5 4.500h7v7H5zM3 6.500H1.500V15h8v-1.500M7.500 4V1.500h7V10H12" fill="none" stroke="#666"/><path d="M8.500 2v9" stroke="#4478b8" stroke-width="1.600"/><path d="M10.500 10.500H16V16h-5.500z" fill="#5a8c5a"/><path d="M13.200 11.300V15M11.500 13.200H15" stroke="#fff" stroke-width="1.200"/></symbol>
<symbol id="d-eye" viewBox="0 0 16 16"><path d="M0 9q7-8 15 0-7 6-15 0z" fill="#fff" stroke="#999"/><circle cx="7.500" cy="8.500" r="3.200" fill="#5d89bf"/><circle cx="7.500" cy="8.500" r="1.300" fill="#222"/><path d="M1 5.500q6-5 13 0" fill="none" stroke="#999"/></symbol>
<symbol id="d-flt" viewBox="0 0 16 16"><path d="M1 .5h14v3H1z" fill="#f6c93c" stroke="#c79a10" stroke-width=".6"/><path d="M1 4h14L10 9v6l-4-2V9z" fill="#5d89bf" stroke="#2c4f80" stroke-width=".6"/></symbol>
<symbol id="d-eps" viewBox="0 0 16 16"><path d="M7 2Q5 .5 3 1.800T4.500 5Q1 5.300 1.500 8T7.500 9" fill="none" stroke="#7b2a6c" stroke-width="1.600"/><path d="M7.500 7.500H16v4l-1.500 4.500v-5h-1.200v5h-2v-5H10v3l-2.500-3z" fill="#a5a5a5"/></symbol>
<symbol id="d-exp" viewBox="0 0 16 16"><path d="M0 1.500h14M2 2v12M2 7h3M2 12h3M0 14.500h6" stroke="#777" fill="none"/><path d="M4 5h4v4H4zM4 10h4v4H4z" fill="#f2a33a"/><path d="M9.500 1h3.500v8h2.500l-4.200 6-4.300-6h2.500z" fill="#4c7ab6" stroke="#2c4f80" stroke-width=".6"/></symbol>
<symbol id="d-col" viewBox="0 0 16 16"><path d="M0 1.500h7M2 2v12M2 7h3M2 12h3M0 14.500h13" stroke="#777" fill="none"/><path d="M4 5h4v4H4zM4 10h4v4H4z" fill="#f2a33a"/><path d="M9.500 14h3.500V7h2.500L11.300 1 7 7h2.500z" fill="#4c7ab6" stroke="#2c4f80" stroke-width=".6"/></symbol>
<symbol id="d-rem" viewBox="0 0 16 16"><rect x="2" y="1.500" width="12" height="12" fill="#f4f4f4" stroke="#777" stroke-width="1.200"/><rect x="9.500" y="10.500" width="6.500" height="5" rx="1.500" fill="#d93030"/><path d="M11 13h3.700" stroke="#fff" stroke-width="1.300"/></symbol>
</svg>

<header class="titlebar d-flex align-items-start justify-content-between">
  <div class="side d-flex align-items-center" style="padding:1px 0 0 2px">
    <svg width="22" height="22" viewBox="0 0 22 22"><circle cx="10.500" cy="10.500" r="7.700" fill="none" stroke="#5c9a22" stroke-width="4"/><circle cx="10.500" cy="10.500" r="7.700" fill="none" stroke="#a5d060" stroke-width="1.200" stroke-dasharray="2 2"/><path d="M11 9l3 1 7 9-2.500 2.500-7-8z" fill="#8dc63f"/><path d="M8.500 7.500l5 1 1 4-3 1-3-2.500z" fill="#f08c28"/></svg>
    <svg width="12" height="14" viewBox="0 0 12 14" style="margin-left:7px"><path d="M6.500.5l5 5-2.300.7-1.700 2 .3 2.500L5 8 .5 13.500 0 13l4-6L1.500 4.300l2.600.2L6 2.800z" fill="#fcfcfc"/></svg>
  </div>
  <div style="padding-top:4px">*Без имени — QGIS</div>
  <div class="side d-flex align-items-center justify-content-end" style="padding:1px 4px 0 0">
    <svg width="62" height="22" viewBox="0 0 62 22"><path d="M0 8.500l5 5 5-5M24 13.500l5-5 5 5" fill="none" stroke="#fcfcfc" stroke-width="1.200"/><circle cx="53" cy="11" r="9" fill="#fcfcfc"/><path d="M48.700 6.700l8.600 8.600M57.300 6.700l-8.600 8.600" stroke="#434b52" stroke-width="1.200"/></svg>
  </div>
</header>

<nav class="menubar d-flex w">
  <span>Проект</span><span>Правка</span><span>Вид</span><span>Слой</span><span>Установки</span><span>Модули</span><span>Вектор</span><span>Растр</span><span>База данных</span><span>Интернет</span><span>Сеть</span><span>Анализ данных</span><span>Справка</span>
</nav>

<div class="toolrow d-flex align-items-center">
  <i class="grip first"></i>
  <b class="tb"><svg><use href="#i-new"/></svg></b><b class="tb"><svg><use href="#i-open"/></svg></b><b class="tb"><svg><use href="#i-save"/></svg></b><b class="tb"><svg><use href="#i-layout"/></svg></b><b class="tb"><svg><use href="#i-layman"/></svg></b><b class="tb"><svg><use href="#i-style"/></svg></b>
  <i class="grip"></i>
  <b class="tb toggled"><svg><use href="#i-hand"/></svg></b><b class="tb off"><svg><use href="#i-pansel"/></svg></b><b class="tb"><svg><use href="#i-zin"/></svg></b><b class="tb"><svg><use href="#i-zout"/></svg></b><b class="tb"><svg><use href="#i-zfull"/></svg></b><b class="tb off"><svg><use href="#i-zsel"/></svg></b><b class="tb"><svg><use href="#i-zlay"/></svg></b><b class="tb off"><svg><use href="#i-znat"/></svg></b><b class="tb"><svg><use href="#i-zlast"/></svg></b><b class="tb off"><svg><use href="#i-znext"/></svg></b><b class="tb"><svg><use href="#i-nmap"/></svg></b><b class="tb"><svg><use href="#i-n3d"/></svg></b><b class="tb"><svg><use href="#i-nbm"/></svg></b><b class="tb"><svg><use href="#i-sbm"/></svg></b><b class="tb"><svg><use href="#i-time"/></svg></b><b class="tb"><svg><use href="#i-refr"/></svg></b>
  <i class="grip"></i>
  <b class="tb"><svg><use href="#i-info"/></svg></b><b class="tb"><svg><use href="#i-abac"/></svg></b><b class="tb"><svg><use href="#i-gear"/></svg></b><b class="tb"><svg><use href="#i-sigma"/></svg></b><b class="tb dd"><svg><use href="#i-table"/></svg></b><b class="tb dd"><svg><use href="#i-meas"/></svg></b><b class="tb"><svg><use href="#i-tip"/></svg></b><b class="tb dd off"><svg><use href="#i-act"/></svg></b>
  <i class="grip"></i>
  <b class="tb"><svg><use href="#i-dsm"/></svg></b><b class="tb"><svg><use href="#i-gpkg"/></svg></b><b class="tb"><svg><use href="#i-shp"/></svg></b><b class="tb"><svg><use href="#i-spl"/></svg></b><b class="tb"><svg><use href="#i-mem"/></svg></b><b class="tb"><svg><use href="#i-mshn"/></svg></b>
  <i class="vsep"></i><b class="tb"><svg><use href="#i-vrt"/></svg></b><i class="vsep"></i>
  <i class="grip"></i>
  <b class="tb off"><svg><use href="#i-hist"/></svg></b><b class="tb off"><svg><use href="#i-hist2"/></svg></b><b class="tb off"><svg><use href="#i-hist"/></svg></b><b class="tb off"><svg><use href="#i-hist2"/></svg></b><b class="tb off"><svg><use href="#i-brup"/></svg></b><b class="tb off"><svg><use href="#i-brdn"/></svg></b><b class="tb off"><svg><use href="#i-coup"/></svg></b><b class="tb off"><svg><use href="#i-codn"/></svg></b><b class="tb off"><svg><use href="#i-gaup"/></svg></b><b class="tb off"><svg><use href="#i-gadn"/></svg></b>
</div>

<div class="toolrow d-flex align-items-center">
  <i class="grip first"></i>
  <b class="tb off menu-in"><svg><use href="#i-pens"/></svg></b><b class="tb"><svg><use href="#i-pen"/></svg></b><b class="tb off"><svg><use href="#i-sedit"/></svg></b><b class="tb off"><svg><use href="#i-addp"/></svg></b><b class="tb dd off"><svg><use href="#i-vert"/></svg></b><b class="tb off"><svg><use href="#i-multi"/></svg></b><b class="tb off"><svg><use href="#i-del"/></svg></b><b class="tb off"><svg><use href="#i-cut"/></svg></b><b class="tb off"><svg><use href="#i-copy"/></svg></b><b class="tb off"><svg><use href="#i-paste"/></svg></b><b class="tb off"><svg><use href="#i-undo"/></svg></b><b class="tb off"><svg><use href="#i-redo"/></svg></b>
  <i class="grip"></i>
  <b class="tb"><svg><use href="#i-mag"/></svg></b><b class="tb off menu-in"><svg><use href="#i-sv"/></svg></b><b class="tb off toggled dim menu-in"><svg><use href="#i-sn3"/></svg></b>
  <div class="box dimmed" style="width:93px;height:25px;margin-left:1px;padding-left:4px"><span class="flex-grow-1">12</span><i class="spin"></i></div>
  <div class="box dimmed" style="width:114px;height:25px;margin-left:2px;padding-left:4px">пикселы<i class="drop"></i></div>
  <b class="tb" style="margin-left:1px"><svg><use href="#i-topo"/></svg></b><b class="tb menu-in"><svg><use href="#i-over"/></svg></b><b class="tb off"><svg><use href="#i-xint"/></svg></b><b class="tb dd off"><svg><use href="#i-zig"/></svg></b><b class="tb off"><svg><use href="#i-nn"/></svg></b>
  <i class="grip"></i>
  <b class="tb"><svg><use href="#i-abc"/></svg></b><b class="tb"><svg><use href="#i-diag"/></svg></b><i class="vsep"></i><b class="tb"><svg><use href="#i-abp"/></svg></b><b class="tb"><svg><use href="#i-abr"/></svg></b><i class="vsep"></i><b class="tb off"><svg><use href="#i-ab1"/></svg></b><b class="tb off"><svg><use href="#i-ab2"/></svg></b><b class="tb off"><svg><use href="#i-ab3"/></svg></b><b class="tb off"><svg><use href="#i-ab4"/></svg></b><b class="tb off"><svg><use href="#i-ab5"/></svg></b>
  <i class="grip"></i>
  <b class="tb"><svg><use href="#i-net1"/></svg></b><b class="tb"><svg><use href="#i-net2"/></svg></b><b class="tb"><svg><use href="#i-bino"/></svg></b>
  <i class="grip"></i><b class="tb"><svg><use href="#i-py"/></svg></b>
  <i class="grip"></i><b class="tb"><svg><use href="#i-book"/></svg></b>
  <i class="grip"></i><i class="grip"></i>
  <b class="tb"><svg><use href="#i-cg"/></svg></b><b class="tb"><svg><use href="#i-cp"/></svg></b><b class="tb off"><svg><use href="#i-ci"/></svg></b><b class="tb off"><svg><use href="#i-cr"/></svg></b>
</div>

<div class="toolrow d-flex align-items-center">
  <i class="grip first"></i>
  <b class="tb off"><svg><use href="#i-cad"/></svg></b><b class="tb dd off"><svg><use href="#i-arc"/></svg></b><b class="tb dd off"><svg><use href="#i-mv"/></svg></b><b class="tb off"><svg><use href="#i-ro"/></svg></b><b class="tb off"><svg><use href="#i-sc"/></svg></b><b class="tb off"><svg><use href="#i-sim"/></svg></b><b class="tb off"><svg><use href="#i-rng"/></svg></b><b class="tb off"><svg><use href="#i-prt"/></svg></b><b class="tb off"><svg><use href="#i-fil"/></svg></b><b class="tb off"><svg><use href="#i-drg"/></svg></b><b class="tb off"><svg><use href="#i-dpt"/></svg></b><b class="tb off"><svg><use href="#i-resh"/></svg></b><b class="tb off"><svg><use href="#i-offs"/></svg></b><b class="tb off"><svg><use href="#i-rev"/></svg></b><b class="tb off"><svg><use href="#i-trim"/></svg></b><b class="tb off"><svg><use href="#i-spf"/></svg></b><b class="tb off"><svg><use href="#i-spf"/></svg></b><b class="tb off"><svg><use href="#i-mrg"/></svg></b><b class="tb off"><svg><use href="#i-mra"/></svg></b><b class="tb dd off"><svg><use href="#i-rotp"/></svg></b>
  <i class="grip"></i>
  <b class="tb dd"><svg><use href="#i-sel"/></svg></b><b class="tb dd"><svg><use href="#i-sele"/></svg></b><b class="tb dd"><svg><use href="#i-dsel"/></svg></b><b class="tb"><svg><use href="#i-sloc"/></svg></b>
  <i class="grip"></i>
  <b class="tb dd"><svg><use href="#i-ann"/></svg></b><b class="tb"><svg><use href="#i-esel"/></svg></b><b class="tb"><svg><use href="#i-apol"/></svg></b><b class="tb"><svg><use href="#i-alin"/></svg></b><b class="tb"><svg><use href="#i-amar"/></svg></b><b class="tb"><svg><use href="#i-atxt"/></svg></b><i class="vsep"></i><b class="tb dd"><svg><use href="#i-abal"/></svg></b>
  <i class="grip"></i>
  <b class="tb dd off"><svg><use href="#i-s1"/></svg></b><b class="tb dd off"><svg><use href="#i-s2"/></svg></b><b class="tb dd off"><svg><use href="#i-s3"/></svg></b><b class="tb dd off"><svg><use href="#i-s4"/></svg></b><b class="tb dd off"><svg><use href="#i-s5"/></svg></b>
  <i class="grip"></i>
  <b class="tb"><svg><use href="#i-cloud"/></svg></b><b class="tb off"><svg><use href="#i-clsy"/></svg></b><i class="vsep"></i><b class="tb"><svg><use href="#i-pk1"/></svg></b><b class="tb"><svg><use href="#i-pk2"/></svg></b><i class="vsep"></i><b class="tb"><svg><use href="#i-tool"/></svg></b>
</div>

<main class="workspace d-flex flex-grow-1">
  <aside class="leftbar d-flex flex-column flex-shrink-0">
    <i class="hgrip"></i>
    <b class="tb"><svg><use href="#l-vec"/></svg></b><b class="tb"><svg><use href="#l-ras"/></svg></b><b class="tb"><svg><use href="#l-msh"/></svg></b><b class="tb"><svg><use href="#l-com"/></svg></b><b class="tb"><svg><use href="#l-spl"/></svg></b><b class="tb"><svg><use href="#l-vir"/></svg></b><b class="tb dd"><svg><use href="#l-pg"/></svg></b><b class="tb"><svg><use href="#l-glb"/></svg></b><b class="tb"><svg><use href="#l-wcs"/></svg></b><b class="tb"><svg><use href="#l-wfs"/></svg></b><b class="tb dd"><svg><use href="#i-gpkg"/></svg></b>
  </aside>
  <section class="dock d-flex flex-column flex-shrink-0">
    <div class="docktitle d-flex align-items-center">
      <span class="flex-grow-1">Слои</span>
      <svg width="26" height="12" viewBox="0 0 26 12"><g fill="none" stroke="#555a5e"><rect x=".5" y=".5" width="11" height="11" rx="2"/><path d="M2.500 5h4.500v4.500H2.500zM5 5V2.500h4.500V7H7"/><rect x="14.500" y=".5" width="11" height="11" rx="2"/><path d="M17 3l6 6M23 3l-6 6" stroke-width="1.800"/></g></svg>
    </div>
    <div class="docktools d-flex align-items-center">
      <b class="tb"><svg><use href="#d-br"/></svg></b><b class="tb"><svg><use href="#d-grp"/></svg></b><b class="tb menu-in"><svg><use href="#d-eye"/></svg></b><b class="tb menu-in"><svg><use href="#d-flt"/></svg></b><b class="tb dd"><svg><use href="#d-eps"/></svg></b><b class="tb"><svg><use href="#d-exp"/></svg></b><b class="tb"><svg><use href="#d-col"/></svg></b><b class="tb"><svg><use href="#d-rem"/></svg></b>
    </div>
    <div class="tree flex-grow-1">
      <div class="layer d-flex align-items-center">
        <span class="chk"><svg width="12" height="12" viewBox="0 0 12 12"><path d="M2.500 6l2.500 4L9.500 1.500" fill="none" stroke="#111" stroke-width="1.700"/></svg></span>
        <span class="swatch"></span><span class="lname">Караульное</span>
      </div>
    </div>
    <div class="docktabs d-flex align-items-start">
      <div class="dtab" style="width:77px;height:25px;background:#dcddde">Браузер</div>
      <div class="dtab" style="width:55px;height:27px;background:#f4f5f6;border-left:0">Слои</div>
    </div>
  </section>
  <div class="split">⋮</div>
  <section class="canvasbox flex-grow-1">
    <svg width="1625" height="831" viewBox="293 168 1625 831" fill="none" stroke="#232323" stroke-width="1.100" stroke-linejoin="round">
      <path fill="#7d8b8e" fill-rule="evenodd" d="M318.600 713.700L350.400 698 495 626.300 554.600 597 667.900 527.300 718.600 536.700 810 554.300 786 440 878.200 448 1160 474 1285 430.300 1301 428.700 1403.300 362.300 1437.200 340 1471 340 1471 336.300 1496.300 336 1502.200 343 1512 343 1517.600 335 1528.600 335 1530.200 339.700 1552.300 341 1572 339.700 1585.800 336.300 1597.600 333.300 1610.200 335 1611.800 326.700 1619.700 326.300 1617.300 335.300 1638.600 340 1649.600 342.300 1668.200 335.300 1659 320.300 1765 304.700 1768.700 301.700 1806.500 276 1865.600 309.300 1798.600 343 1763.100 347.700 1770.600 318.300 1760.400 312.300 1716.200 347.700 1736.700 350.700 1734.400 352 1737 358.300 1753.300 362.700 1757.200 365.300 1758.400 370 1756.800 376.700 1760.400 382 1767.500 383 1767 389.300 1762.400 394.700 1769 396.700 1767.900 401.700 1770.200 406.700 1769 410 1771.800 412.700 1770.200 416 1771.800 421.700 1766.700 422.700 1767 432 1771.800 433.300 1770.200 438.300 1773 444 1770.200 448 1771.800 451 1769 453.300 1766.300 465 1769.500 470.700 1769.500 475.300 1765 479.300 1762 483.700 1756.400 486 1754 490 1752.900 493.300 1748.600 501 1747 511.700 1747.800 518.700 1755.300 525 1760 530.700 1757.600 535 1757.200 543.300 1755.300 547.300 1750.700 560.700 1750.400 571.700 1748.200 582.300 1742.900 591.700 1739.300 607.300 1741.400 611.300 1736.400 618.300 1733.600 626 1732.900 636.700 1730.400 643.300 1730.400 655 1732 664 1737.500 670 1741 676.700 1746.400 682 1753.600 685.300 1771.400 687.300 1792.900 689.700 1796.800 691.300 1797.500 696.700 1795.700 701.700 1793 703.300 1793 707.700 1800.700 715 1801.800 726 1816.800 736.700 1809 738 1771.400 738.300 1741 740.700 1700.700 745.700 1687.500 748 1676.800 750.700 1655.400 750.700 1634 753.300 1614.300 752.700 1585.700 758.700 1557 762 1546 765 1542.500 781 1532.900 782.300 1528.600 785.300 1512.500 790.700 1506.400 795.300 1489.300 800 1464.300 804.700 1446.400 807 1428.600 810.700 1407 814 1385.700 814.700 1357 817 1326.800 820.700 1318.600 820.300 1310.700 823.700 1300 825.300 1292 826.300 1248.600 826.300 1231.400 829 1192 830.700 1164.300 830.300 1145.700 827 1113.600 827.300 1088.600 825.300 1085 822 1074.300 819.700 1067 816.700 1027.900 807.300 1018 804.700 988.600 801.700 954 797 938.600 796.300 910 792 881.400 787.300 856.400 784.300 816.800 781.700 788.600 784 769.600 784.300 718.600 790 712.500 782.700 697.500 782 694.600 780 681.400 779.300 664.300 782.700 634 780.300 589.300 783.700 576.800 788 517.900 795 492.900 799.700 464 801 446.400 803.300 431.800 803.300ZM1114.600 625L1134.600 629 1095.700 676 1075.400 671ZM732.500 775.300L754 776.300 753.200 780 745.700 780.300 744.600 782.300 736.800 782.300 736 779.300 732.500 779.300ZM1438.200 788.700h6.400v3.600h-6.400z"/>
      <!-- parcel rows -->
      <path d="M350.400 698L540.400 713.700 685 723 825.700 732.300 961.800 742.300 1097.500 752 1191.400 756.700 1262.900 760.700 1334.600 763.700 1407.900 768 1477.500 771.700 1543.600 775.700M495 626.300L558.600 633.300 700 641 841 649.700 920.700 655.700 973.200 657.700 1082 664.300M1104.600 665.300L1207.900 673.300 1281 678.300 1352.900 683 1425 687.300 1491.800 691.700 1561.800 694.700 1632 697.700 1701.800 696.700 1741 704 1794 703.300M810.400 556L859.300 560.300 992.500 571.300 1125.700 582M1123.600 594L1223.600 597.700 1280.700 599.300 1370 603.700 1442 607 1478.600 609.300 1502.900 612.700 1584.600 616.700 1649.600 620.300 1733 624.700M871.400 489L1008.600 497 1155.700 504.300 1296.400 514.300 1460.800 525.300 1599.600 536 1755.300 547M1285 430.300L1314.600 432.300 1477.400 443 1616 453 1766.300 465.700M1403.300 362.300L1491.600 367.700 1631.500 375.300 1760.400 382.300"/>
      <!-- parcel columns -->
      <path d="M558.600 633.300L540.400 713.700 522.500 794.700M718.600 536.700L718.200 548.300 700 641 685 723 672.900 781M878.200 448L871.400 489 859.300 560.300 841 649.700 825.700 732.300 816.800 782M1008.600 497L992.500 571.300 973.200 657.700 961.800 742.300 954 797M1223.600 597.700L1207.900 673.300 1191.400 756.700M1297 600.300L1281 678.300 1262.900 760.700 1248.600 826.300M1370 603.700L1352.900 683 1334.600 763.700 1321 820.300M1491.600 367.700L1485.300 410 1477.400 443 1460.800 525.300 1442 607 1425 687.300 1407.900 768 1397.500 814M1502.900 612.700L1491.800 691.700 1477.500 771.700M1638.600 340L1631.500 375.300 1616 453 1599.600 536 1584.600 616.700 1575 656.700 1561.800 694.700 1546 765M1649.600 620.300L1632 697.700 1618.600 752.700M1314.600 432.300L1296.400 514.300 1280.700 599.300M1702.500 697.300L1700.700 745.700"/>
      <!-- streams -->
      <path d="M1160 474L1154.300 480.300 1162.900 487.700 1164.600 491.700 1162.900 495.700 1157 500 1155.700 504.300 1150 511.700 1145.400 519.300 1145.400 530 1140.700 538.300 1135 552.700 1131.400 565 1127 572.700 1125.700 582 1123.600 589 1123.600 594 1127.900 600 1135 607.300 1138.600 616.700 1136.800 621.700 1132.900 628M1095.700 676L1092 685 1091.400 696.700 1089.300 703.300 1089.300 716.700 1091.400 730 1089.600 740 1097.500 752 1112.500 780.700 1124.300 789 1138.600 797 1156.400 804.700 1162 808.300 1160.700 819.300 1164.600 826.700 1164.600 830.300"/>
      <path stroke-width="1.700" d="M1768.700 301.700L1775 303.300 1784.800 309.300 1796.700 309.300 1822.300 313.300 1836 313 1865.600 309.300"/>
    </svg>
  </section>
</main>

<footer class="statusbar d-flex align-items-center w">
  <div class="box" style="width:200px;height:26px;font-size:13px;color:#8e9194;padding-left:8px"><svg width="14" height="14" viewBox="0 0 14 14" style="margin-right:6px"><circle cx="5.500" cy="5.500" r="4.500" fill="none" stroke="#7f8285" stroke-width="1.200"/><path d="M9 9l4.500 4.500" stroke="#7f8285" stroke-width="1.200"/></svg>Искать (Ctrl+K)</div>
  <div style="width:730px;padding-left:8px;color:#111">Переключает режим правки текущего слоя</div>
  <div style="width:79px;padding-left:8px">Координаты</div>
  <div class="box" style="width:98px">92,4925 56,0103</div>
  <svg width="16" height="16" viewBox="0 0 16 16" style="margin:0 12px 0 5px"><path d="M1 2l8 9M4 1l9 10M1 6l7 8M9 1l-3 4M13 1L9 5M15 4l-4 4" stroke="#333" stroke-width="1.500"/><circle cx="11" cy="12" r="3" fill="#eee" stroke="#333" stroke-width="1.300"/></svg>
  <div style="width:97px">Масштабировать</div>
  <div class="box" style="width:88px;padding-left:3px">1:17738<i class="drop" style="border-left:1px solid #b1b3b5"></i></div>
  <svg width="12" height="16" viewBox="0 0 12 16" style="margin:0 8px 0 12px"><path d="M3 8V4.500a3 3 0 0 1 6 0V8" fill="none" stroke="#777" stroke-width="1.600"/><rect x=".5" y="7" width="11" height="8.500" rx="1" fill="#5c5f61"/></svg>
  <div style="width:70px">Увеличение</div>
  <div class="box" style="width:93px"><span class="flex-grow-1">100%</span><i class="spin"></i></div>
  <div style="width:66px;padding-left:10px">Поворот</div>
  <div class="box" style="width:89px"><span class="flex-grow-1">0,0 °</span><i class="spin"></i></div>
  <span class="chk" style="margin:0 5px 0 7px"><svg width="12" height="12" viewBox="0 0 12 12"><path d="M2.500 6l2.500 4L9.500 1.500" fill="none" stroke="#111" stroke-width="1.700"/></svg></span>
  <div style="width:73px">Отрисовка</div>
  <svg width="16" height="14" viewBox="0 0 16 14" style="margin-right:2px"><ellipse cx="8" cy="7" rx="7.500" ry="6.500" fill="#5c5f61"/><path d="M8 0v14M0 5h16M0 9h16" stroke="#eff0f1"/><ellipse cx="8" cy="7" rx="3.500" ry="6.500" fill="none" stroke="#eff0f1"/></svg>
  <div style="width:78px">EPSG:4326</div>
  <svg width="16" height="16" viewBox="0 0 16 16"><path d="M8 1c10 0 9 10 4 11l1.500 3.500L8.500 12C-2 12-1 1 8 1z" fill="#55585a"/><circle cx="4.500" cy="6.500" r="1.100" fill="#fff"/><circle cx="8" cy="6.500" r="1.100" fill="#fff"/><circle cx="11.500" cy="6.500" r="1.100" fill="#fff"/></svg>
  <svg width="12" height="14" viewBox="0 0 12 14" class="align-self-end" style="margin-left:auto"><g fill="#b4b6b8"><path d="M10 2h1v1h-1zM10 6h1v1h-1zM10 10h1v1h-1zM6 6h1v1H6zM6 10h1v1H6zM2 10h1v1H2z"/></g></svg>
</footer>

<svg class="pointer" width="14" height="24" viewBox="0 0 14 24"><path d="M1 1l11 14.500-4 .5 1.500 4.500-3 1L5 17.500l-4 3z" fill="#43474a" stroke="#fff" stroke-width="1.200"/></svg>
</body>
</html>
